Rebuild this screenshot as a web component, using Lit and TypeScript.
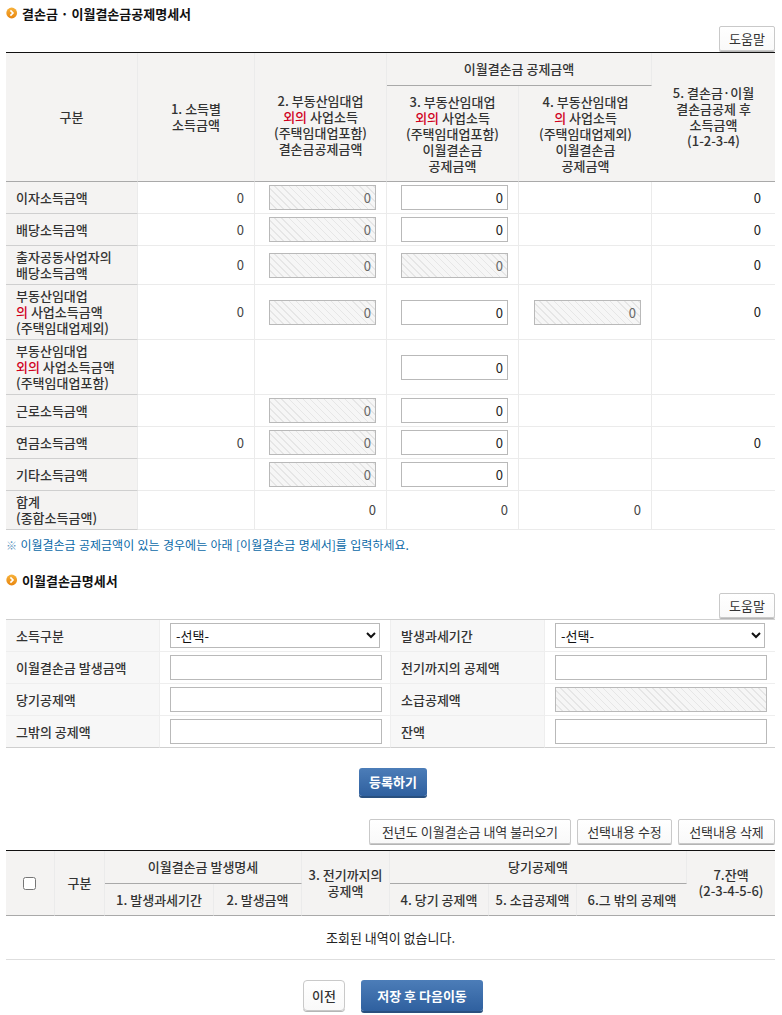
import { LitElement, html, css, nothing } from "lit";
import { customElement } from "lit/decorators.js";

type Cell = "" | "0" | "in" | "dis";
interface Row { label: unknown; h: number; cells: Cell[] }

const red = (t: string) => html`<span class="red">${t}</span>`;

const rows: Row[] = [
  { label: "이자소득금액", h: 32, cells: ["0", "dis", "in", "", "0"] },
  { label: "배당소득금액", h: 32, cells: ["0", "dis", "in", "", "0"] },
  { label: html`출자공동사업자의<br />배당소득금액`, h: 39, cells: ["0", "dis", "dis", "", "0"] },
  { label: html`부동산임대업<br />${red("의")} 사업소득금액<br />(주택임대업제외)`, h: 55, cells: ["0", "dis", "in", "dis", "0"] },
  { label: html`부동산임대업<br />${red("외의")} 사업소득금액<br />(주택임대업포함)`, h: 55, cells: ["", "", "in", "", ""] },
  { label: "근로소득금액", h: 32, cells: ["", "dis", "in", "", ""] },
  { label: "연금소득금액", h: 32, cells: ["0", "dis", "in", "", "0"] },
  { label: "기타소득금액", h: 32, cells: ["", "dis", "in", "", ""] },
  { label: html`합계<br />(종합소득금액)`, h: 39, cells: ["", "0", "0", "0", ""] },
];

@customElement("app-root")
export class AppRoot extends LitElement {
  static styles = css`
    :host {
      display: block;
      box-sizing: border-box;
      width: 782px;
      height: 1015px;
      overflow: hidden;
      padding: 6px 7px 0 6px;
      background: #fff;
      font-family: "Noto Sans CJK KR", "Noto Sans", sans-serif;
      font-size: 13px;
      line-height: 16px;
      color: #333;
    }
    * { box-sizing: border-box; }
    .title {
      display: flex;
      align-items: flex-start;
      gap: 4px;
      height: 16px;
      font-weight: 700;
      font-size: 13px;
      color: #111;
    }
    .title svg { margin-top: 1px; flex: none; }
    .help { display: flex; justify-content: flex-end; margin: 4px 0 1px; }
    .btn {
      height: 25px;
      padding: 0;
      font: inherit;
      color: #333;
      background: linear-gradient(#fff, #f9f9f9);
      border: 1px solid #c9c9c9;
      border-radius: 2px;
      box-shadow: 0 1px 0 #b5b5b5;
      text-align: center;
    }
    .w56 { width: 56px; }
    .w202 { width: 202px; }
    .w95 { width: 95px; }
    .w97 { width: 97px; }
    table { border-collapse: separate; border-spacing: 0; table-layout: fixed; width: 769px; }
    .black { border-top: 1px solid #111; }
    th, td { padding: 0; border-right: 1px solid #ebebeb; border-bottom: 1px solid #ebebeb; }
    tr > :last-child { border-right: 0; }
    th { background: #f4f3f2; font-weight: 500; text-align: center; vertical-align: middle; color: #333; }
    .hb { border-bottom-color: #a9a9a9; }
    .lab { background: #f4f3f2; font-weight: 500; text-align: left; padding-left: 10px; border-bottom-color: #cfcfcf; }
    .shift { padding-top: 16px; }
    .red { color: #d0001e; }
    .val { text-align: right; padding-right: 10px; color: #444; }
    .val.last { padding-right: 14px; color: #222; }
    input[type="text"] {
      display: inline-block;
      vertical-align: middle;
      height: 25px;
      border: 1px solid #b9b9b9;
      border-radius: 0;
      background: #fff;
      font: inherit;
      color: #222;
      text-align: right;
      padding: 0 4px;
      margin: 0;
      outline: none;
    }
    .num { width: 107px; }
    .wide { width: 212px; }
    input.dis {
      color: #666;
      background: repeating-linear-gradient(45deg, #f6f6f6 0 4px, #e6e6e6 4px 5px);
    }
    .note { margin: 7px 0 20px; font-size: 12px; color: #0b6aa8; height: 16px; word-spacing: 0.7px; }
    .note span { color: #5f97bf; font-size: 11px; }
    .form { border-top: 1px solid #cfcfcf; }
    .form th {
      background: #f7f7f7;
      text-align: left;
      padding-left: 10px;
      border-bottom-color: #eee;
      border-right-color: #eee;
    }
    .form td { padding-left: 10px; border-bottom-color: #eee; vertical-align: middle; border-right-color: #eee; }
    .form tr:last-child th, .form tr:last-child td { border-bottom-color: #cfcfcf; }
    select {
      display: block;
      width: 210px;
      height: 25px;
      font: inherit;
      color: #111;
      background: #fff;
      border: 1px solid #b9b9b9;
      border-radius: 0;
      padding: 0 1px;
      margin: 0;
      outline: none;
    }
    .center { display: flex; justify-content: center; padding-left: 5px; }
    .primary {
      font: inherit;
      font-weight: 700;
      color: #fff;
      padding: 0;
      border: 0;
      border-radius: 3px;
      background: linear-gradient(#4c7db8, #2f609f);
      box-shadow: 0 2px 0 #29507f;
      text-align: center;
    }
    .reg { width: 68px; height: 28px; margin-top: 20px; }
    .actions { display: flex; justify-content: flex-end; gap: 6px; margin: 23px 0 6px; }
    .list th { border-bottom-color: #a9a9a9; }
    .list input[type="checkbox"] { display: block; margin: 0 0 0 17px; width: 13px; height: 13px; }
    .empty { text-align: center; color: #222; border-bottom-color: #dedede; }
    .bottom { gap: 16px; margin-top: 20px; }
    .prev { width: 42px; height: 31px; border-radius: 4px; font-weight: 500; }
    .save { width: 122px; height: 31px; }
  `;

  private icon() {
    return html`<svg width="12" height="12" viewBox="0 0 12 12" aria-hidden="true">
      <defs>
        <linearGradient id="o" x1="0" y1="0" x2="0" y2="1">
          <stop offset="0" stop-color="#f7b23b" />
          <stop offset="1" stop-color="#e8860f" />
        </linearGradient>
      </defs>
      <circle cx="5.7" cy="6" r="5.4" fill="url(#o)" />
      <path d="M4.4 3.4 7 6 4.4 8.6" fill="none" stroke="#fff" stroke-width="1.6" />
    </svg>`;
  }

  private cell(c: Cell, last: boolean) {
    const cls = last ? "val last" : "val";
    if (c === "in") return html`<td class=${cls}><input type="text" class="num" value="0" /></td>`;
    if (c === "dis") return html`<td class=${cls}><input type="text" class="num dis" value="0" readonly /></td>`;
    return html`<td class=${cls}>${c === "0" ? "0" : nothing}</td>`;
  }

  private income() {
    return html`<table class="black">
      <colgroup>
        <col style="width:132px" /><col style="width:117px" /><col style="width:132px" />
        <col style="width:132px" /><col style="width:133px" /><col style="width:123px" />
      </colgroup>
      <tr style="height:33px">
        <th rowspan="2" class="hb">구분</th>
        <th rowspan="2" class="hb">1. 소득별<br />소득금액</th>
        <th rowspan="2" class="hb shift">2. 부동산임대업<br />${red("외의")} 사업소득<br />(주택임대업포함)<br />결손금공제금액</th>
        <th colspan="2" class="hb">이월결손금 공제금액</th>
        <th rowspan="2" class="hb">5. 결손금·이월<br />결손금공제 후<br />소득금액<br />(1-2-3-4)</th>
      </tr>
      <tr style="height:96px">
        <th class="hb">3. 부동산임대업<br />${red("외의")} 사업소득<br />(주택임대업포함)<br />이월결손금<br />공제금액</th>
        <th class="hb">4. 부동산임대업<br />${red("의")} 사업소득<br />(주택임대업제외)<br />이월결손금<br />공제금액</th>
      </tr>
      ${rows.map(
        (r) => html`<tr style="height:${r.h}px">
          <th class="lab">${r.label}</th>
          ${r.cells.map((c, i) => this.cell(c, i === 4))}
        </tr>`
      )}
    </table>`;
  }

  private form() {
    return html`<table class="form">
      <colgroup>
        <col style="width:154px" /><col style="width:231px" /><col style="width:154px" /><col style="width:230px" />
      </colgroup>
      <tr style="height:32px">
        <th>소득구분</th>
        <td><select><option>-선택-</option></select></td>
        <th>발생과세기간</th>
        <td><select><option>-선택-</option></select></td>
      </tr>
      <tr style="height:32px">
        <th>이월결손금 발생금액</th>
        <td><input type="text" class="wide" /></td>
        <th>전기까지의 공제액</th>
        <td><input type="text" class="wide" /></td>
      </tr>
      <tr style="height:32px">
        <th>당기공제액</th>
        <td><input type="text" class="wide" /></td>
        <th>소급공제액</th>
        <td><input type="text" class="wide dis" readonly /></td>
      </tr>
      <tr style="height:32px">
        <th>그밖의 공제액</th>
        <td><input type="text" class="wide" /></td>
        <th>잔액</th>
        <td><input type="text" class="wide" /></td>
      </tr>
    </table>`;
  }

  private list() {
    return html`<table class="black list">
      <colgroup>
        <col style="width:49px" /><col style="width:50px" /><col style="width:109px" />
        <col style="width:88px" /><col style="width:88px" /><col style="width:99px" />
        <col style="width:88px" /><col style="width:110px" /><col style="width:88px" />
      </colgroup>
      <tr style="height:33px">
        <th rowspan="2"><input type="checkbox" /></th>
        <th rowspan="2">구분</th>
        <th colspan="2">이월결손금 발생명세</th>
        <th rowspan="2">3. 전기까지의<br />공제액</th>
        <th colspan="3">당기공제액</th>
        <th rowspan="2">7.잔액<br />(2-3-4-5-6)</th>
      </tr>
      <tr style="height:32px">
        <th>1. 발생과세기간</th>
        <th>2. 발생금액</th>
        <th>4. 당기 공제액</th>
        <th>5. 소급공제액</th>
        <th>6.그 밖의 공제액</th>
      </tr>
      <tr style="height:44px">
        <td colspan="9" class="empty">조회된 내역이 없습니다.</td>
      </tr>
    </table>`;
  }

  render() {
    return html`
      <div class="title">${this.icon()}<span>결손금 · 이월결손금공제명세서</span></div>
      <div class="help"><button class="btn w56">도움말</button></div>
      ${this.income()}
      <div class="note"><span>※</span> 이월결손금 공제금액이 있는 경우에는 아래 [이월결손금 명세서]를 입력하세요.</div>
      <div class="title">${this.icon()}<span>이월결손금명세서</span></div>
      <div class="help"><button class="btn w56">도움말</button></div>
      ${this.form()}
      <div class="center"><button class="primary reg">등록하기</button></div>
      <div class="actions">
        <button class="btn w202">전년도 이월결손금 내역 불러오기</button>
        <button class="btn w95">선택내용 수정</button>
        <button class="btn w97">선택내용 삭제</button>
      </div>
      ${this.list()}
      <div class="center bottom">
        <button class="btn prev">이전</button>
        <button class="primary save">저장 후 다음이동</button>
      </div>
    `;
  }
}
